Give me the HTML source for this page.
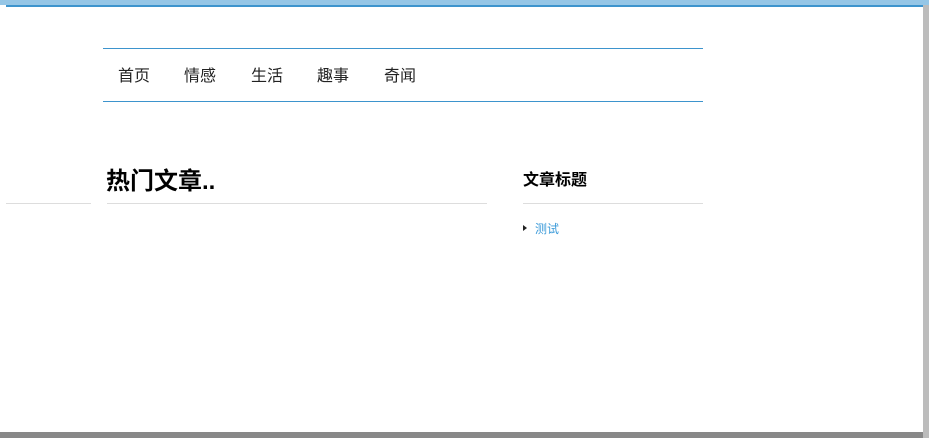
<!DOCTYPE html>
<html><head><meta charset="utf-8"><style>
body{margin:0;width:929px;height:438px;position:relative;overflow:hidden;background:#fff;font-family:"Liberation Sans","Noto Sans CJK SC",sans-serif}
.a{position:absolute}
.n span{position:absolute;white-space:nowrap}
</style></head><body>
<div class="a" style="left:0;top:0;width:929px;height:5px;background:#95c6e6"></div>
<div class="a" style="left:6px;top:5px;width:917px;height:2px;background:#3d94cd"></div>
<div class="a" style="left:923px;top:5px;width:6px;height:433px;background:#bcbcbc"></div>
<div class="a" style="left:0;top:432px;width:923px;height:6px;background:#888"></div>
<div class="a" style="left:103px;top:48px;width:600px;height:1px;background:#3d94cd"></div>
<div class="a" style="left:103px;top:101px;width:600px;height:1px;background:#3d94cd"></div>
<div class="a n" style="top:66px;left:118px;font-size:16px;color:#222;line-height:22px">
<span style="left:0">首页</span><span style="left:66px">情感</span><span style="left:133px">生活</span><span style="left:199px">趣事</span><span style="left:266px">奇闻</span></div>
<div class="a" style="left:106px;top:167px;font-size:24px;font-weight:bold;color:#000;line-height:30px;white-space:nowrap">热门文章..</div>
<div class="a" style="left:6px;top:203px;width:85px;height:1px;background:#ddd"></div>
<div class="a" style="left:107px;top:203px;width:380px;height:1px;background:#ddd"></div>
<div class="a" style="left:523px;top:170px;font-size:16px;font-weight:bold;color:#000;line-height:22px;white-space:nowrap">文章标题</div>
<div class="a" style="left:523px;top:203px;width:180px;height:1px;background:#ddd"></div>
<div class="a" style="left:523px;top:225px;width:0;height:0;border-left:4px solid #222;border-top:3.5px solid transparent;border-bottom:3.5px solid transparent"></div>
<div class="a" style="left:535px;top:221px;font-size:12px;color:#3a9ad9;line-height:17px;white-space:nowrap">测试</div>
</body></html>
